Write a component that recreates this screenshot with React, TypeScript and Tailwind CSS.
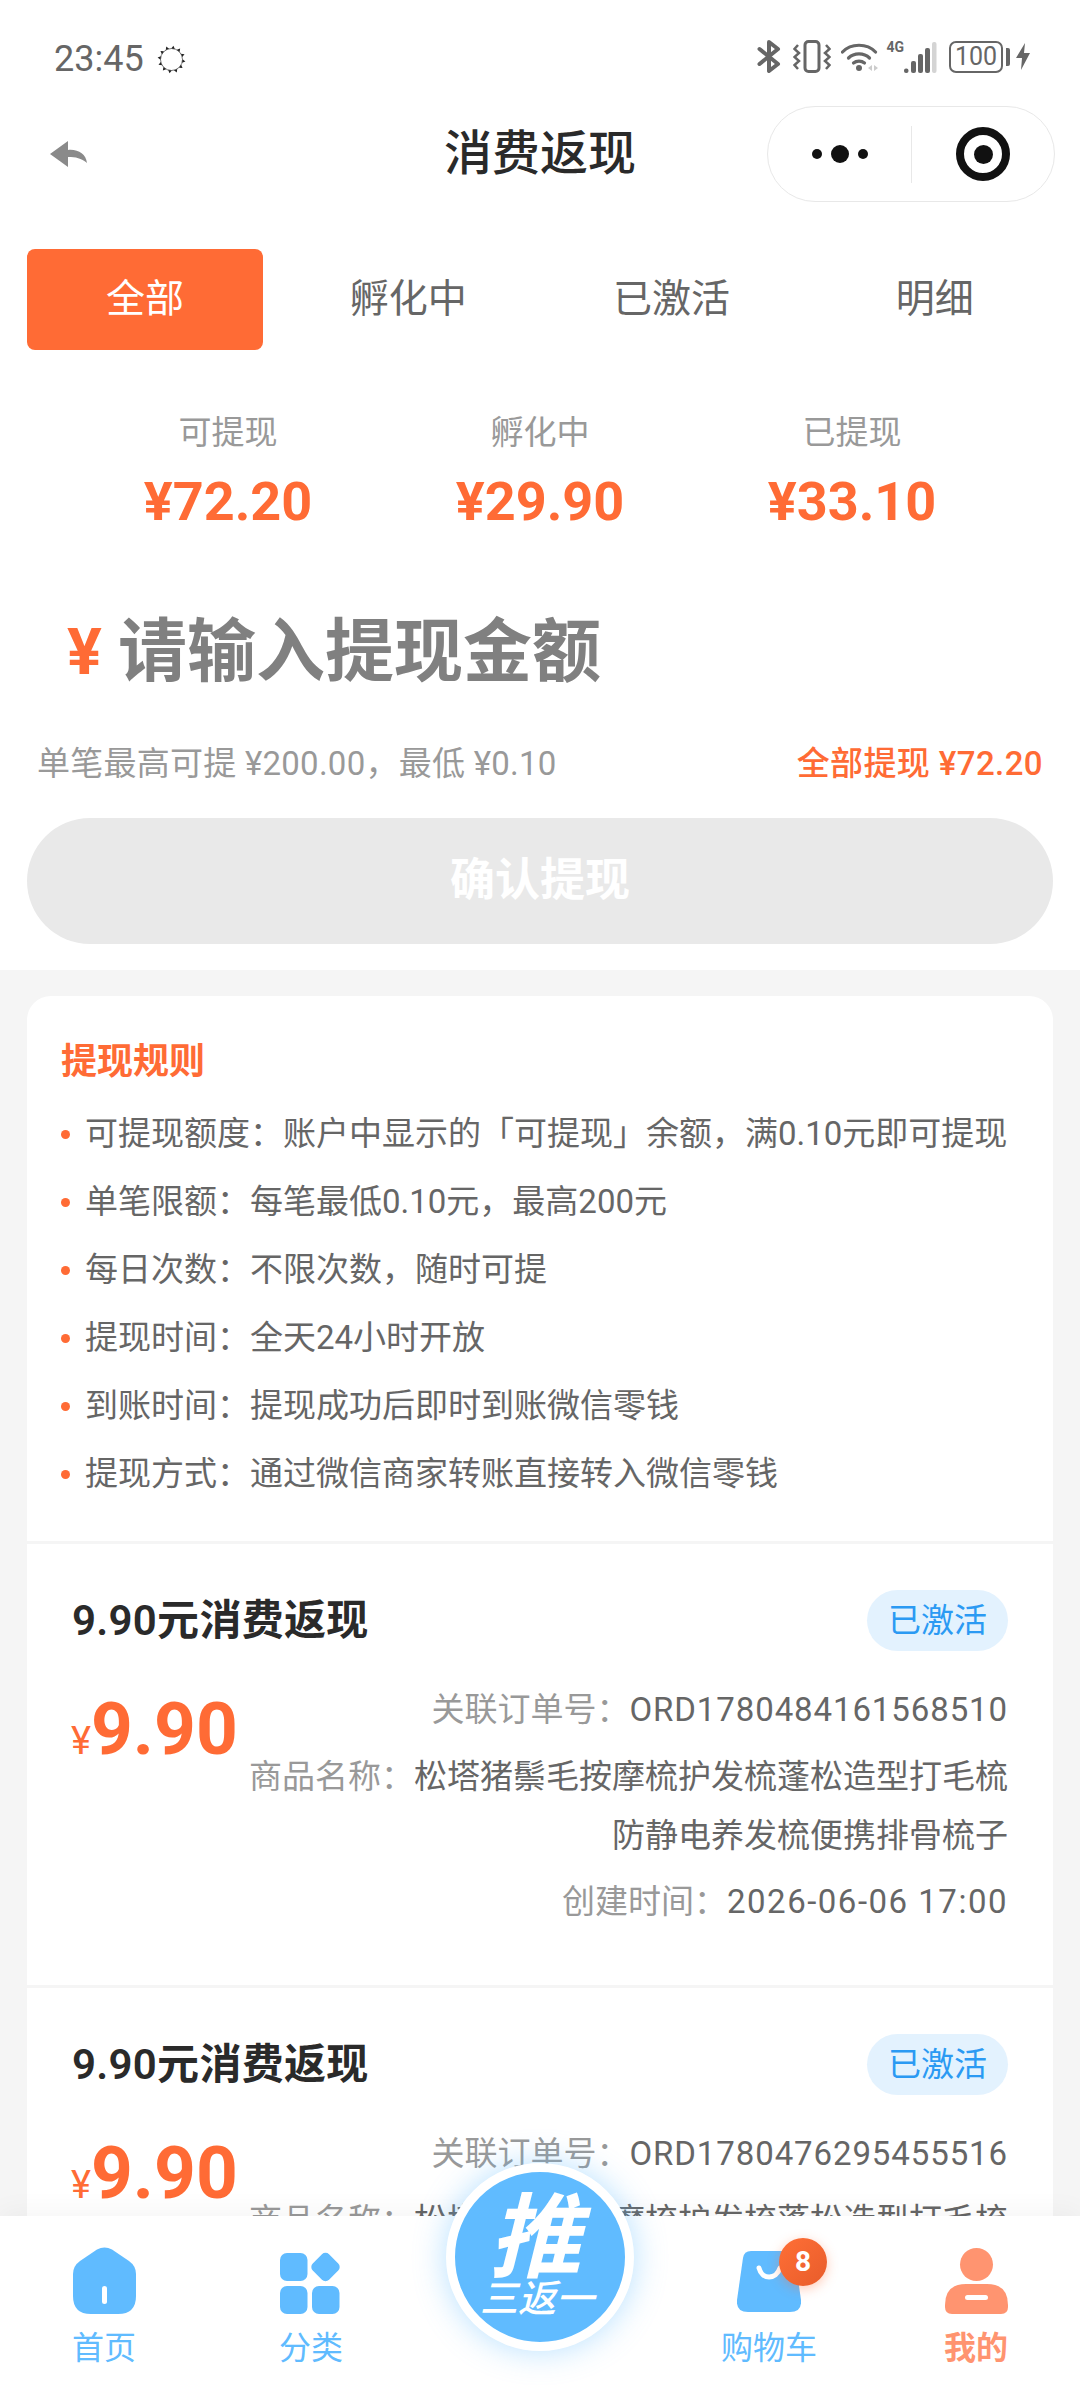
import React from "react";

const rules = [
  "可提现额度：账户中显示的「可提现」余额，满0.10元即可提现",
  "单笔限额：每笔最低0.10元，最高200元",
  "每日次数：不限次数，随时可提",
  "提现时间：全天24小时开放",
  "到账时间：提现成功后即时到账微信零钱",
  "提现方式：通过微信商家转账直接转入微信零钱",
];

const stats = [
  { label: "可提现", value: "¥72.20" },
  { label: "孵化中", value: "¥29.90" },
  { label: "已提现", value: "¥33.10" },
];

// the second card runs under the tab bar, its time row is never seen
const orders: { no: string; time?: string }[] = [
  { no: "ORD1780484161568510", time: "2026-06-06 17:00" },
  { no: "ORD1780476295455516" },
];

function SunIcon() {
  return (
    <svg width="29" height="29" viewBox="0 0 29 29">
      <circle cx="14.5" cy="14.5" r="11" fill="none" stroke="#555" strokeWidth="0.8" />
      {Array.from({ length: 12 }).map((_, i) => (
        <path key={i} d="M14.5 0.5 L16.3 3.6 H12.7 Z" fill="#222" transform={`rotate(${i * 30 + 8} 14.5 14.5)`} />
      ))}
    </svg>
  );
}

function StatusIcons() {
  return (
    <div className="flex items-center text-[#666]">
      <svg width="24" height="33" viewBox="0 0 24 33" fill="none" stroke="#666" strokeWidth="4" strokeLinejoin="round" strokeLinecap="round">
        <path d="M2.5 9 L21 24 L12 31 V2 L21 9 L2.5 24" />
      </svg>
      <svg className="ml-[12px]" width="38" height="33" viewBox="0 0 38 33" fill="none" stroke="#666" strokeWidth="3">
        <rect x="12" y="1.5" width="14" height="30" rx="3.5" />
        <path d="M5 5 L1.5 9 L6 13 L1.5 17 L6 21 L1.5 25 L5 29" strokeWidth="2.5" />
        <path d="M33 5 L36.5 9 L32 13 L36.5 17 L32 21 L36.5 25 L33 29" strokeWidth="2.5" />
      </svg>
      <svg className="ml-[10px]" width="38" height="31" viewBox="0 0 38 31" fill="none" stroke="#666" strokeWidth="3.2" strokeLinecap="round">
        <path d="M1.5 11 C10 2 26 2 34.5 11" />
        <path d="M7.5 17 C13 11.5 23 11.5 28.5 17" />
        <path d="M12.5 22 C15.5 19.5 20.5 19.5 23.5 22" />
        <circle cx="18" cy="27" r="3" fill="#666" stroke="none" />
        <path d="M31 24 V30 L27 27 Z M33 24 V30 L37 27 Z" fill="#ccc" stroke="none" />
      </svg>
      <div className="ml-[7px] flex h-[33px]">
        <span className="self-start text-[14px] leading-[14px] font-bold">4G</span>
        <svg className="self-end" width="33" height="31" viewBox="0 0 33 31">
          <rect x="0" y="26.5" width="4.5" height="4.5" rx="2" fill="#666" />
          <rect x="7" y="19" width="5" height="12" rx="2" fill="#666" />
          <rect x="14" y="12" width="5" height="19" rx="2" fill="#666" />
          <rect x="21" y="6" width="5" height="25" rx="2" fill="#666" />
          <rect x="28" y="0" width="4.5" height="31" rx="2" fill="#d4d4d4" />
        </svg>
      </div>
      <div className="ml-[12px] flex h-[32px] w-[54px] items-center justify-center rounded-[7px] border-[2.5px] border-[#666] text-[25px] leading-none">
        100
      </div>
      <div className="ml-[3px] h-[18px] w-[4px] rounded-r-[2px] bg-[#666]" />
      <svg className="ml-[6px]" width="14" height="27" viewBox="0 0 14 27">
        <path d="M9 0 L0 15 H6 L5 27 L14 10 H8 Z" fill="#666" />
      </svg>
    </div>
  );
}

function HomeIcon() {
  return (
    <svg width="63" height="67" viewBox="0 0 63 67">
      <path d="M24 2.5 Q31.5 -1.5 39 2.5 L56 14 Q63 19 63 27 V49 Q63 67 45 67 H18 Q0 67 0 49 V27 Q0 19 7 14 Z" fill="#60bbff" />
      <rect x="29" y="39" width="5" height="18" rx="2.5" fill="#fff" />
    </svg>
  );
}

function CategoryIcon() {
  return (
    <svg width="62" height="63" viewBox="0 0 62 63" fill="#60bbff">
      <rect x="0" y="2" width="27.5" height="28" rx="7" />
      <rect x="0" y="35" width="27.5" height="28" rx="7" />
      <rect x="32" y="35" width="27.5" height="28" rx="7" />
      <rect x="34" y="4.5" width="23" height="23" rx="5" transform="rotate(45 45.5 16)" />
    </svg>
  );
}

function BagIcon() {
  return (
    <svg width="64" height="61" viewBox="0 0 64 61">
      <path d="M14 0 H50 Q57 0 58 7 L64 49 Q65 61 53 61 H11 Q-1 61 0 49 L6 7 Q7 0 14 0 Z" fill="#60bbff" />
      <path d="M22 17 C25 29 39 29 43 17" fill="none" stroke="#fff" strokeWidth="5" strokeLinecap="round" />
    </svg>
  );
}

function MineIcon() {
  return (
    <svg width="63" height="66" viewBox="0 0 63 66" fill="#ff9470">
      <circle cx="31.5" cy="16.5" r="16.5" />
      <path d="M21 36 H42 Q63 36 63 57 V59 Q63 66 56 66 H7 Q0 66 0 59 V57 Q0 36 21 36 Z" />
      <rect x="20" y="47" width="23" height="5" rx="2.5" fill="#fff" />
    </svg>
  );
}

function OrderCard({ no, time }: { no: string; time?: string }) {
  return (
    <div className="mt-[3px] bg-white px-[45px] pt-[46px] pb-[54px]">
      <div className="flex h-[61px] items-center justify-between">
        <div className="text-[42px] leading-none font-semibold tracking-[0.3px] text-[#2a2a2a]">9.90元消费返现</div>
        <div className="flex h-[61px] w-[141px] items-center justify-center rounded-full bg-[#e3f2fe] text-[33px] text-[#2b9af3]">
          已激活
        </div>
      </div>
      <div className="mt-[29px] flex justify-between">
        <div className="mt-[11px] ml-[-1px] flex items-baseline font-bold text-[#ff6b35]">
          <span className="text-[38px] leading-none font-normal">¥</span>
          <span className="text-[73px] leading-[76px]">9.90</span>
        </div>
        <div className="flex w-[760px] flex-col gap-[7.5px] text-right text-[33px] leading-[59px] text-[#666]">
          <div>
            <span className="text-[#999]">关联订单号：</span>
            <span className="tracking-[0.9px]">{no}</span>
          </div>
          <div>
            <span className="text-[#999]">商品名称：</span>
            松塔猪鬃毛按摩梳护发梳蓬松造型打毛梳防静电养发梳便携排骨梳子
          </div>
          {time && (
            <div>
              <span className="text-[#999]">创建时间：</span>
              <span className="tracking-[1.5px]">{time}</span>
            </div>
          )}
        </div>
      </div>
    </div>
  );
}

export default function App() {
  return (
    <div
      lang="zh-CN"
      className="relative h-[2388px] w-[1080px] overflow-hidden bg-[#f5f5f5] font-['Roboto','Noto_Sans_CJK_SC',sans-serif]"
    >
      <div className="bg-white pb-[26px]">
        {/* status bar */}
        <div className="flex h-[106px] items-start justify-between pt-[40px] pr-[50px] pl-[54px]">
          <div className="flex h-[38px] items-center gap-[13px] text-[36px] leading-none text-[#666]">
            23:45
            <SunIcon />
          </div>
          <StatusIcons />
        </div>

        {/* nav */}
        <div className="flex h-[96px] items-center">
          <div className="w-[313px] pl-[50px]">
            <svg width="37" height="26" viewBox="0 0 37 26">
              <path d="M0 13 L18 0 V9 C28 8 36 13 37 22 C31 17 26 16 18 16 V26 Z" fill="#8a8a8a" />
            </svg>
          </div>
          <div className="flex-1 text-center text-[48px] leading-none font-medium text-[#2a2a2a]">消费返现</div>
          <div className="w-[313px]">
            <div className="flex h-[96px] w-[288px] items-center rounded-full border border-[#e8e8e8] bg-white">
              <div className="flex w-[143px] items-center justify-center gap-[9px]">
                <span className="h-[10px] w-[10px] rounded-full bg-[#111]" />
                <span className="h-[18px] w-[18px] rounded-full bg-[#111]" />
                <span className="h-[10px] w-[10px] rounded-full bg-[#111]" />
              </div>
              <div className="h-[57px] w-px bg-[#e8e8e8]" />
              <div className="flex flex-1 items-center justify-center">
                <div className="flex h-[54px] w-[54px] items-center justify-center rounded-full border-[8px] border-[#111]">
                  <span className="h-[19px] w-[19px] rounded-full bg-[#111]" />
                </div>
              </div>
            </div>
          </div>
        </div>

        {/* tabs */}
        <div className="mt-[47px] flex gap-[27px] px-[27px]">
          {["全部", "孵化中", "已激活", "明细"].map((t, i) => (
            <div
              key={t}
              className={
                i === 0
                  ? "flex h-[101px] flex-1 items-center justify-center rounded-[8px] bg-[#ff6b35] text-[39px] text-white"
                  : "flex h-[101px] flex-1 items-center justify-center text-[39px] text-[#666]"
              }
            >
              {t}
            </div>
          ))}
        </div>

        {/* stats */}
        <div className="mt-[63px] grid grid-cols-3 px-[72px]">
          {stats.map((s) => (
            <div key={s.label} className="flex flex-col items-center gap-[19px]">
              <div className="text-[33px] leading-[40px] text-[#999]">{s.label}</div>
              <div className="text-[54px] leading-[60px] font-bold text-[#ff6b35]">{s.value}</div>
            </div>
          ))}
        </div>

        {/* amount input */}
        <div className="mt-[70px] flex h-[100px] items-center pl-[67px]">
          <span className="w-[53px] text-[65px] leading-none font-bold text-[#ff6b35]">¥</span>
          <span className="ml-[-2px] text-[69px] leading-none font-bold text-[#808080]">请输入提现金额</span>
        </div>

        <div className="mt-[42px] flex items-center justify-between px-[37px] text-[33px] leading-[40px]">
          <span className="tracking-[0.25px] text-[#999]">单笔最高可提 ¥200.00，最低 ¥0.10</span>
          <span className="tracking-[0.4px] font-medium text-[#ff6b35]">全部提现 ¥72.20</span>
        </div>

        <div className="mx-[27px] mt-[34px] flex h-[126px] items-center justify-center rounded-full bg-[#e9e9e9] text-[45px] font-bold text-white">
          确认提现
        </div>
      </div>

      {/* rules + list */}
      <div className="mx-[27px] mt-[26px]">
        <div className="rounded-t-[24px] bg-white px-[34px] pt-[44px] pb-[33px]">
          <div className="text-[36px] leading-[44px] font-bold text-[#ff6b35]">提现规则</div>
          <div className="mt-[16px]">
            {rules.map((r) => (
              <div key={r} className="flex h-[68px] items-center text-[33px] text-[#666]">
                <span className="h-[9px] w-[9px] rounded-full bg-[#ff6b35]" />
                <span className="ml-[15px] whitespace-nowrap">{r}</span>
              </div>
            ))}
          </div>
        </div>
        {orders.map((o) => (
          <OrderCard key={o.no} no={o.no} time={o.time} />
        ))}
      </div>

      {/* bottom tab bar */}
      <div className="absolute right-0 bottom-0 left-0 h-[172px] bg-white pt-[31px] shadow-[0_-6px_24px_rgba(0,0,0,0.04)]">
        <div className="grid grid-cols-[208px_206px_252px_206px_208px]">
          <div className="flex flex-col items-center">
            <div className="flex h-[67px] items-end">
              <HomeIcon />
            </div>
            <div className="mt-[14px] text-[32px] leading-[40px] text-[#60bbff]">首页</div>
          </div>
          <div className="flex flex-col items-center">
            <div className="flex h-[67px] items-end">
              <CategoryIcon />
            </div>
            <div className="mt-[14px] text-[32px] leading-[40px] text-[#60bbff]">分类</div>
          </div>
          <div />
          <div className="flex flex-col items-center">
            <div className="relative flex h-[67px] items-end pb-[2px]">
              <BagIcon />
              <div className="absolute top-[-9px] left-[42px] flex h-[48px] w-[48px] items-center justify-center rounded-full bg-gradient-to-br from-[#ff6f36] to-[#e85c2b] text-[28px] font-bold text-white shadow-[0_3px_12px_rgba(255,107,53,0.35)]">
                8
              </div>
            </div>
            <div className="mt-[14px] text-[32px] leading-[40px] text-[#60bbff]">购物车</div>
          </div>
          <div className="flex flex-col items-center">
            <div className="flex h-[67px] items-end">
              <MineIcon />
            </div>
            <div className="mt-[14px] text-[32px] leading-[40px] font-bold text-[#ff9470]">我的</div>
          </div>
        </div>
      </div>

      {/* center promo button */}
      <div className="absolute top-[2163px] left-[446px] flex h-[188px] w-[188px] flex-col items-center justify-center rounded-full border-[9px] border-white bg-[#60bbff] text-white shadow-[0_0_32px_rgba(96,187,255,0.45)]">
        <div className="mt-[2px] ml-[-10px] text-[92px] leading-[82px] font-bold italic">推</div>
        <div className="ml-[-6px] text-[38px] leading-[38px] font-medium italic">三返一</div>
      </div>
    </div>
  );
}
